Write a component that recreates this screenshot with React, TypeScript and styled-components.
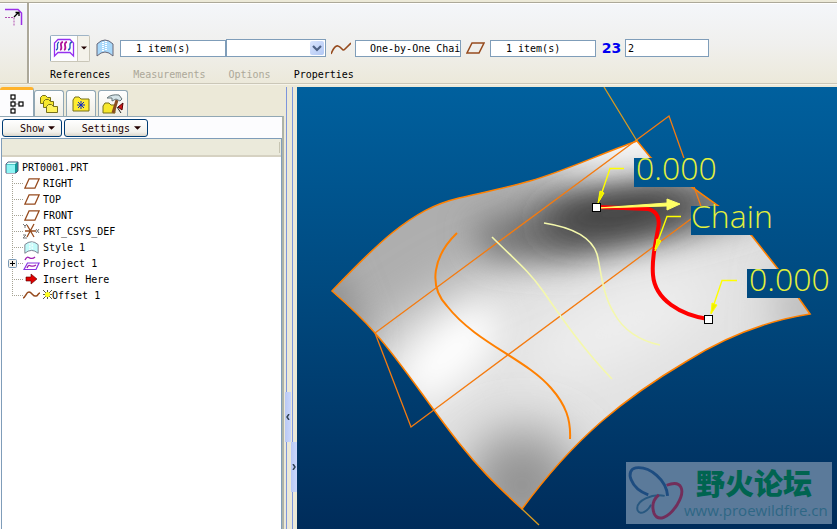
import React from "react";
import styled, { createGlobalStyle } from "styled-components";

const Global = createGlobalStyle`
  * { box-sizing: border-box; }
  html, body { margin: 0; height: 100%; overflow: hidden; }
  body, button, input, select {
    font-family: "DejaVu Sans Mono", "Liberation Mono", monospace;
    font-size: 10px;
    color: #000;
  }
`;

const Page = styled.div`
  display: flex;
  flex-direction: column;
  height: 100vh;
  background: #ece9d8;
`;

const Dashboard = styled.header`
  display: flex;
  flex: none;
  margin-top: 2px;
  border-top: 1px solid #aca899;
  border-bottom: 1px solid #cbc7b8;
  background: linear-gradient(#f4f6fa, #f0f0ee 50%, #ece9da);
  height: 82px;
  box-shadow: 0 1px 0 #f6f4ea, inset 0 1px 0 #fff;
`;

const Corner = styled.div`
  flex: none;
  width: 29px;
  padding: 5px 0 0 4px;
  border-right: 2px solid #aca899;
`;

const Controls = styled.div`
  display: flex;
  flex: 1;
  flex-direction: column;
  justify-content: flex-end;
  gap: 5px;
  padding: 0 0 0 20px;
  border-left: 1px solid #fff;
  min-width: 0;
`;

const FieldRow = styled.div`
  display: flex;
  align-items: center;
  height: 28px;
`;

const IconSlot = styled.span<{ $w: number }>`
  display: flex;
  flex: none;
  align-items: center;
  justify-content: center;
  width: ${(p) => p.$w}px;
`;

const SplitButton = styled.button`
  display: flex;
  flex: none;
  width: 40px;
  height: 27px;
  padding: 0;
  border: 1px solid #c9c6b8;
  border-left-color: #7f9db9;
  border-top-color: #9fb4c6;
  border-radius: 2px;
  background: #f4f2ea;
`;

const SplitFace = styled.span`
  display: flex;
  align-items: center;
  justify-content: center;
  width: 27px;
  height: 100%;
  background: #fdfdff;
  border-right: 1px solid #c9c6b8;
`;

const SplitArrow = styled.span`
  display: flex;
  flex: 1;
  height: 100%;
  align-items: center;
  justify-content: center;
`;

const Field = styled.input<{ $w: number; $indent: number; $h: number }>`
  flex: none;
  width: ${(p) => p.$w}px;
  height: ${(p) => p.$h}px;
  padding: 0 0 0 ${(p) => p.$indent}px;
  border: 1px solid #7f9db9;
  border-radius: 0;
  background: #fff;
`;

const Combo = styled.span`
  position: relative;
  flex: none;
  width: 100px;
  height: 18px;
`;

const ComboSelect = styled.select`
  width: 100%;
  height: 100%;
  appearance: none;
  border: 1px solid #7f9db9;
  border-radius: 0;
  background: #fff;
`;

const ComboArrow = styled.span`
  position: absolute;
  right: 2px;
  top: 2px;
  display: flex;
  align-items: center;
  justify-content: center;
  width: 14px;
  height: 14px;
  border-radius: 2px;
  background: linear-gradient(135deg, #d9e4fd, #b2c8f4);
  pointer-events: none;
`;

const Number23 = styled.label`
  flex: none;
  width: 29px;
  padding-left: 2px;
  text-align: center;
  font: bold 14px "DejaVu Sans", sans-serif;
  color: #0000f0;
`;

const PanelTabs = styled.nav`
  display: flex;
  gap: 23px;
  height: 16px;
`;

const PanelTab = styled.button`
  padding: 0;
  border: 0;
  background: none;
  line-height: 16px;
  &:disabled { color: #aca899; }
`;

const Body = styled.div`
  display: flex;
  flex: 1;
  min-height: 0;
  margin-top: 3px;
`;

const Sidebar = styled.aside`
  display: flex;
  flex: none;
  flex-direction: column;
  width: 284px;
`;

const TabStrip = styled.div`
  display: flex;
  align-items: flex-end;
  flex: none;
  height: 30px;
`;

const NavTab = styled.button<{ $active?: boolean }>`
  display: flex;
  align-items: center;
  justify-content: center;
  width: ${(p) => (p.$active ? 34 : 30)}px;
  height: ${(p) => (p.$active ? 30 : 27)}px;
  padding: 0;
  margin-right: ${(p) => (p.$active ? 0 : 2)}px;
  border: 1px solid #91a7b4;
  border-bottom: 0;
  border-left-width: ${(p) => (p.$active ? 0 : 1)}px;
  border-top: ${(p) => (p.$active ? "3px solid #ffb32c" : "1px solid #91a7b4")};
  border-radius: 3px 3px 0 0;
  background: ${(p) => (p.$active ? "#fcfcfe" : "linear-gradient(#fff, #eeece2)")};
`;

const SidePanel = styled.div`
  display: flex;
  flex: 1;
  flex-direction: column;
  min-height: 0;
  margin-top: -1px;
  border-top: 1px solid #91a7b4;
  border-right: 2px solid #aeb3a8;
  background: #fcfcfe;
`;

const Menus = styled.div`
  display: flex;
  gap: 2px;
  padding: 2px 2px 1px;
`;

const MenuButton = styled.button<{ $w: number }>`
  display: flex;
  align-items: center;
  justify-content: flex-end;
  gap: 4px;
  width: ${(p) => p.$w}px;
  height: 18px;
  padding: 0 6px 0 0;
  border: 1px solid #003c74;
  border-radius: 3px;
  background: linear-gradient(#fff, #f2f1ec 75%, #dbd7cc);
  color: #200;
`;

const Tree = styled.div`
  display: flex;
  flex: 1;
  flex-direction: column;
  margin: 0 0 0 1px;
  border: 1px solid #7f9db9;
  border-bottom: 0;
  background: #fff;
`;

const TreeHeader = styled.div`
  height: 18px;
  margin-bottom: 2px;
  border-bottom: 2px solid #d6d2c2;
  background: #ebeadb;
  padding: 3px 1px;
  &::after {
    content: "";
    display: block;
    height: 11px;
    border-right: 1px solid #c7c5b2;
  }
`;

const TreeList = styled.ul`
  list-style: none;
  margin: 0;
  padding: 0;
`;

const TreeRow = styled.li<{ $root?: boolean }>`
  display: flex;
  align-items: center;
  height: 16px;
  padding-left: ${(p) => (p.$root ? 3 : 5)}px;
  white-space: pre;
`;

const TreeText = styled.span`
  margin-left: 3px;
`;

const Splitter = styled.div`
  display: flex;
  flex: none;
  width: 13px;
  padding-left: 1px;
`;

const SplitTrack = styled.div<{ $top: number }>`
  display: flex;
  flex-direction: column;
  width: 6px;
  padding-top: ${(p) => p.$top}px;
  background: linear-gradient(90deg, #ece9d8 1px, #7d95dc 1px, #7d95dc 2px, #ece9d8 2px);
`;

const Grip = styled.button`
  display: flex;
  align-items: center;
  justify-content: center;
  width: 6px;
  height: 50px;
  padding: 0;
  border: 0;
  background: linear-gradient(90deg, #b9c8f4, #cbd8fc);
`;

const Viewport = styled.main`
  position: relative;
  flex: 1;
  min-width: 0;
  overflow: hidden;
  background: linear-gradient(#00609e, #004a80 45%, #002c5a);
`;

const Scene = styled.svg`
  display: block;
  width: 100%;
  height: 100%;
`;

const Watermark = styled.div`
  position: absolute;
  right: 5px;
  bottom: 5px;
  display: flex;
  width: 206px;
  height: 62px;
  background: #5b7a9a;
`;

const WatermarkLogo = styled.svg`
  flex: none;
  width: 58px;
  height: 62px;
`;

const Brand = styled.div`
  display: flex;
  flex: 1;
  flex-direction: column;
  min-width: 0;
`;

const BrandName = styled.strong`
  padding-left: 12px;
  font: 900 29px/40px "Noto Sans CJK SC", sans-serif;
  color: #006450;
`;

const BrandLink = styled.a`
  font: 15px/16px "Open Sans", "Noto Sans", sans-serif;
  color: #2e6785;
  text-decoration: none;
`;

const Down = ({ w = 7 }: { w?: number }) => (
  <svg width={w} height="4" viewBox="0 0 8 4" aria-hidden><path d="M0 0H8L4 4Z" fill="#200" /></svg>
);

const CornerIcon = () => (
  <svg width="20" height="20" fill="none" aria-hidden>
    <path d="M1 1.500H14l3.500 3.500V17" stroke="#9b30e8" strokeWidth="1.500" />
    <path d="M1 9.500H10V18" stroke="#b04fb0" strokeDasharray="2 1" />
    <path d="M10 9L15 4M11.500 4.500H15V8" stroke="#000" strokeWidth="1.300" />
  </svg>
);

const OffsetIcon = () => (
  <svg width="22" height="20" fill="none" aria-hidden>
    <path d="M1.500 18V5L5 1.500H17L20.500 5V18L17 14.500H5Z" fill="#fff" stroke="#9430f0" strokeWidth="1.300" />
    <path d="M7 12C11 11 5 5 10 4M11 12C15 11 9 5 14 4" stroke="#b0149c" strokeWidth="1.800" />
    <path d="M3 12C7 11 2 6 6 4M15 12C20 11 14 5 19 4" stroke="#2060b8" strokeWidth="1.300" />
  </svg>
);

const SurfaceIcon = ({ small }: { small?: boolean }) => (
  <svg width={small ? 15 : 18} height={small ? 13 : 18} viewBox="0 0 18 18" preserveAspectRatio="none" aria-hidden>
    <path d="M1 17V5Q9-3 17 5V17Q9 9 1 17Z" fill={small ? "#c2fafa" : "#a9d8fa"} stroke="#667" strokeWidth="1" />
    <path d="M7 3V12M10 2V12" stroke="#fff" strokeWidth="2" strokeDasharray="1 1" />
  </svg>
);

const CurveIcon = ({ w = 20 }: { w?: number }) => (
  <svg width={w} height="13" viewBox="0 0 20 13" fill="none" aria-hidden>
    <path d="M0 12C2 7 4 3 7 4C11 5 11 10 14 7L20 1" stroke="#964b1e" strokeWidth="1.600" />
  </svg>
);

const TreeCurveIcon = () => (
  <svg width="17" height="10" fill="none" aria-hidden>
    <path d="M0 8C3 7 3 2 6 2C9 2 10 7 13 6C15 6 15 3 17 3" stroke="#964b1e" strokeWidth="1.500" />
  </svg>
);

const PlaneIcon = ({ w = 19, h = 12 }: { w?: number; h?: number }) => (
  <svg width={w} height={h} viewBox="0 0 19 12" preserveAspectRatio="none" fill="none" aria-hidden>
    <path d="M6 1H18L13 11H1Z" stroke="#964b1e" strokeWidth="1.500" />
  </svg>
);

const FOLDER = "M0 10V3L2 0H6L8 2H12V10Z";

const TreeTabIcon = () => (
  <svg width="14" height="20" fill="#fff" stroke="#000" strokeWidth="1.200" aria-hidden>
    <path d="M3 3V17M3 10H10" stroke="#777" strokeWidth="1" />
    <rect x="1" y="1" width="4" height="4" /><rect x="1" y="8" width="4" height="4" />
    <rect x="1" y="15" width="4" height="4" /><rect x="9" y="8" width="4" height="4" />
  </svg>
);

const FoldersIcon = () => (
  <svg width="20" height="20" fill="#f6e72c" stroke="#77701a" aria-hidden>
    <path d="M0 8V2L2 0H5L7 2H10V8Z" transform="translate(1.500 1.500)" />
    <path d="M0 8V2L2 0H5L7 2H10V8Z" transform="translate(4.500 5.500)" />
    <path d="M0 8V2L2 0H5L7 2H11V8Z" transform="translate(7.500 10.500)" fill="#fff35c" />
  </svg>
);

const FavoriteIcon = () => (
  <svg width="18" height="17" fill="none" aria-hidden>
    <path d="M1 15V4L3 1H7L9 3H17V15Z" fill="#ffec30" stroke="#77701a" />
    <path d="M9 5V13M5 9H13M6 6L12 12M12 6L6 12" stroke="#0a26c8" />
  </svg>
);

const ToolsIcon = () => (
  <svg width="22" height="20" fill="none" aria-hidden>
    <path d={FOLDER} transform="translate(1 9)" fill="#f6e72c" stroke="#77701a" />
    <path d="M15 6L11 19" stroke="#8a4d20" strokeWidth="3" />
    <path d="M5 4Q9 0 17 1L20 5L18 7L14 5L10 7V4Z" fill="#d5e4e8" stroke="#657478" />
    <path d="M21 9L16 13L20 16Z" fill="#d01818" stroke="#500" /><path d="M15 13L19 19" stroke="#222" />
  </svg>
);

const PartIcon = () => (
  <svg width="14" height="13" aria-hidden>
    <path d="M1 3L3 1H13V10L11 12H1Z" fill="#109b9b" stroke="#557" />
    <path d="M1.500 3.500H10V12H1.500Z" fill="#8ef4f4" /><path d="M1.500 3L3 1.500H12L10 3Z" fill="#e4ffff" />
  </svg>
);

const CsysIcon = () => (
  <svg width="17" height="16" fill="none" stroke="#964b1e" strokeWidth="1.300" aria-hidden>
    <path d="M2 8H13M4 2L11 14M11 1L4 14" />
    <path d="M0 1L2 3L4 1M2 3V5M0 12H3L0 15H4M13 6L16 10M16 6L13 10" stroke="#777" strokeWidth="1" />
  </svg>
);

const ProjectIcon = () => (
  <svg width="17" height="16" fill="none" aria-hidden>
    <path d="M4.500 8H16L13 14.500H1Z" stroke="#8836e0" strokeWidth="1.200" />
    <path d="M2 5C5-2 7 7 12 2M4 13C6 7 8 14 13 10" stroke="#a020b0" strokeWidth="1.300" />
  </svg>
);

const InsertIcon = () => (
  <svg width="13" height="12" aria-hidden><path d="M1 4H6V1L12 6L6 11V8H1Z" fill="#e00000" stroke="#500" strokeWidth=".6" /></svg>
);

const Branch = ({ last, plus }: { last?: boolean; plus?: boolean }) => (
  <svg width="16" height="16" fill="none" stroke="#a5a394" aria-hidden>
    <path d={last ? "M5.500 0V8" : "M5.500 0V16"} strokeDasharray="1 1" />
    <path d="M5 8.500H16" strokeDasharray="1 1" />
    {plus && (
      <>
        <rect x="1.500" y="4.500" width="8" height="8" rx="1" fill="#f2f0ea" stroke="#7898b5" />
        <path d="M3 8.500H8M5.500 6V11" stroke="#000" />
      </>
    )}
  </svg>
);

const Star = () => (
  <svg width="9" height="9" aria-hidden>
    <path d="M0 0L9 9M9 0L0 9M4.500 0V9M0 4.500H9" stroke="#554" /><circle cx="4.500" cy="4.500" r="2.600" fill="#ffff20" />
  </svg>
);

const features = [
  { name: "RIGHT", icon: <PlaneIcon w={16} h={11} /> },
  { name: "TOP", icon: <PlaneIcon w={16} h={11} /> },
  { name: "FRONT", icon: <PlaneIcon w={16} h={11} /> },
  { name: "PRT_CSYS_DEF", icon: <CsysIcon /> },
  { name: "Style 1", icon: <SurfaceIcon small /> },
  { name: "Project 1", icon: <ProjectIcon />, plus: true },
  { name: "Insert Here", icon: <InsertIcon /> },
  { name: "Offset 1", icon: <TreeCurveIcon />, star: true },
];

const OUTLINE =
  "M332 291C352 270 370 251 392 233C416 214 434 204 459 198C485 192 505 188 530 181C565 171 600 154 637 141L651 158L720 207L752 236L778 269L810 314C765 321 722 339 687 361C626 397 575 437 522 509C493 482 478 467 459 443C430 407 402 363 375 333C362 318 347 304 332 291Z";

const Callout = styled.text`
  font-family: "Open Sans", sans-serif;
  font-size: 32px;
  font-weight: 300;
  fill: #e4f03c;
`;

const SurfaceScene = () => (
  <Scene viewBox="297 87 540 442" preserveAspectRatio="xMinYMin slice" role="img" aria-label="Surface model">
    <defs>
      <clipPath id="surface"><path d={OUTLINE} /></clipPath>
      <filter id="soft" filterUnits="userSpaceOnUse" x="180" y="0" width="760" height="640"><feGaussianBlur stdDeviation="17" /></filter>
      <filter id="wide" filterUnits="userSpaceOnUse" x="180" y="0" width="760" height="640"><feGaussianBlur stdDeviation="25" /></filter>
      <linearGradient id="bg" x1="0" y1="87" x2="0" y2="529" gradientUnits="userSpaceOnUse">
        <stop offset="0" stopColor="#00609e" /><stop offset=".45" stopColor="#004a80" /><stop offset="1" stopColor="#002c5a" />
      </linearGradient>
    </defs>
    <g clipPath="url(#surface)">
      <rect x="320" y="130" width="500" height="390" fill="#e2e2e2" />
      <path d="M250 310L380 110L620 90L560 240L455 285L400 320L330 380Z" fill="#aeaeae" filter="url(#wide)" />
      <path d="M290 300L335 260L370 350Z" fill="#8c8c8c" filter="url(#soft)" />
      <path d="M470 228L570 196L730 175L760 215L660 242L570 262L490 256Z" fill="#6e6e6e" filter="url(#soft)" />
      <ellipse cx="618" cy="213" rx="76" ry="22" transform="rotate(-8 618 213)" fill="#3e3e3e" filter="url(#soft)" />
      <path d="M500 162L650 85L665 146L590 164Z" fill="#fff" filter="url(#soft)" />
      <ellipse cx="450" cy="353" rx="60" ry="26" transform="rotate(-42 450 353)" fill="#fff" filter="url(#soft)" />
      <ellipse cx="620" cy="325" rx="100" ry="34" transform="rotate(-25 620 325)" fill="#efefef" filter="url(#wide)" />
      <ellipse cx="522" cy="485" rx="56" ry="56" fill="#939393" filter="url(#wide)" />
      <path d="M790 250L850 320L780 350Z" fill="#a8a8a8" filter="url(#wide)" />
    </g>
    <g fill="none" stroke="#ff8000" strokeWidth="1.600">
      <path d={OUTLINE} />
      <path d="M457 233C433 256 428 286 447 306C476 343 526 359 551 388C566 405 571 420 570 439" strokeWidth="2" />
      <path d="M375 333L669 116L703 212M375 333L411 427L703 210" stroke="#f47b10" strokeWidth="1.300" />
      <path d="M604 87L637 141M522 509L539 525" stroke="#d89a20" strokeWidth="1.300" />
    </g>
    <g fill="none" stroke="#f4f8ac" strokeWidth="1.600">
      <path d="M492 237C515 260 528 270 543 291C563 320 584 350 612 379" />
      <path d="M544 223C570 227 591 236 597 254C601 269 602 294 614 313C623 330 640 341 660 345" />
    </g>
    <path d="M598 207L648 209C658 211 660 220 658 229C654 250 652 262 653 275C655 300 681 315 708 319" fill="none" stroke="#f00" strokeWidth="4" />
    <path d="M598 208L667 203V199L680 204L667 210V206Z" fill="#ffff66" stroke="#ffff66" />
    <g fill="none" stroke="#ff0" strokeWidth="1.400">
      <path d="M624 168.500H610L599 201M681 216.500H667L655 249M737 280.500H722L711 313" />
      <path d="M598 203L600 191L604 193ZM655 251L657 239L661 241ZM711 314L712 303L717 305Z" fill="#ee0" strokeWidth="1" />
    </g>
    <g fill="#fff" stroke="#000" strokeWidth="1">
      <rect x="592.500" y="203.500" width="8" height="8" /><rect x="704.500" y="315.500" width="8" height="8" />
    </g>
    <g fill="url(#bg)">
      <rect x="634" y="158" width="84" height="29" /><rect x="691" y="206" width="84" height="29" /><rect x="747" y="269" width="84" height="29" />
    </g>
    <Callout x="636" y="180">0.000</Callout>
    <Callout x="691" y="228">Chain</Callout>
    <Callout x="749" y="291">0.000</Callout>
  </Scene>
);

export default function App() {
  return (
    <Page>
      <Global />
      <Dashboard>
        <Corner><CornerIcon /></Corner>
        <Controls>
          <FieldRow>
            <SplitButton aria-label="Offset type">
              <SplitFace><OffsetIcon /></SplitFace>
              <SplitArrow><Down w={6} /></SplitArrow>
            </SplitButton>
            <IconSlot $w={30}><SurfaceIcon /></IconSlot>
            <Field $w={106} $h={17} $indent={15} aria-label="Surface" defaultValue="1 item(s)" />
            <Combo>
              <ComboSelect aria-label="Surface set"><option value="" /></ComboSelect>
              <ComboArrow>
                <svg width="10" height="8" fill="none" aria-hidden><path d="M1 2L5 6L9 2" stroke="#4d6185" strokeWidth="2.200" /></svg>
              </ComboArrow>
            </Combo>
            <IconSlot $w={29}><CurveIcon /></IconSlot>
            <Field $w={106} $h={17} $indent={14} aria-label="Chain" defaultValue="One-by-One Chain" />
            <IconSlot $w={29}><PlaneIcon /></IconSlot>
            <Field $w={106} $h={17} $indent={15} aria-label="Plane" defaultValue="1 item(s)" />
            <Number23 htmlFor="offset">23</Number23>
            <Field $w={84} $h={18} $indent={2} id="offset" defaultValue="2" />
          </FieldRow>
          <PanelTabs>
            <PanelTab>References</PanelTab>
            <PanelTab disabled>Measurements</PanelTab>
            <PanelTab disabled>Options</PanelTab>
            <PanelTab>Properties</PanelTab>
          </PanelTabs>
        </Controls>
      </Dashboard>
      <Body>
        <Sidebar>
          <TabStrip>
            <NavTab $active aria-label="Model tree"><TreeTabIcon /></NavTab>
            <NavTab aria-label="Folders"><FoldersIcon /></NavTab>
            <NavTab aria-label="Favorites"><FavoriteIcon /></NavTab>
            <NavTab aria-label="Tools"><ToolsIcon /></NavTab>
          </TabStrip>
          <SidePanel>
            <Menus>
              <MenuButton $w={60}>Show <Down /></MenuButton>
              <MenuButton $w={84}>Settings <Down /></MenuButton>
            </Menus>
            <Tree>
              <TreeHeader />
              <TreeList>
                <TreeRow $root><PartIcon /><TreeText>PRT0001.PRT</TreeText></TreeRow>
                {features.map((f, i) => (
                  <TreeRow key={f.name}>
                    <Branch last={i === features.length - 1} plus={f.plus} />
                    <IconSlot $w={17}>{f.icon}</IconSlot>
                    <TreeText>{f.star && <Star />}{f.name}</TreeText>
                  </TreeRow>
                ))}
              </TreeList>
            </Tree>
          </SidePanel>
        </Sidebar>
        <Splitter>
          <SplitTrack $top={305}>
            <Grip aria-label="Collapse tree"><svg width="4" height="6" fill="none" aria-hidden><path d="M3 0L1 3L3 6" stroke="#345" strokeWidth="1.500" /></svg></Grip>
          </SplitTrack>
          <SplitTrack $top={355}>
            <Grip aria-label="Expand tree"><svg width="4" height="6" fill="none" aria-hidden><path d="M1 0L3 3L1 6" stroke="#345" strokeWidth="1.500" /></svg></Grip>
          </SplitTrack>
        </Splitter>
        <Viewport>
          <SurfaceScene />
          <Watermark>
            <WatermarkLogo viewBox="0 0 60 62" fill="none" strokeWidth="3" aria-hidden>
              <path d="M43 34C42 18 25 3 10 5C-1 7 4 26 23 33" stroke="#1d4c80" />
              <path d="M40 34C28 31 9 39 12 49C15 55 23 49 26 43" stroke="#285880" strokeWidth="2" />
              <path d="M42 23C58 17 62 28 53 43C44 57 33 61 29 52C26 43 29 37 34 33" stroke="#722e5a" />
            </WatermarkLogo>
            <Brand>
              <BrandName>野火论坛</BrandName>
              <BrandLink href="#forum">www.proewildfire.cn</BrandLink>
            </Brand>
          </Watermark>
        </Viewport>
      </Body>
    </Page>
  );
}
